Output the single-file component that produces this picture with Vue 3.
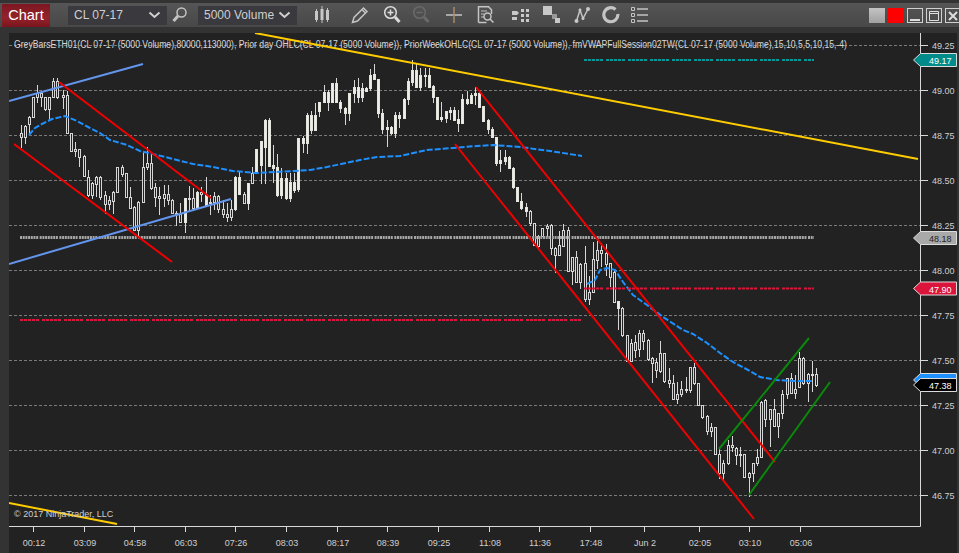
<script setup>
const segs = [
  { ox: 0, oy: 60, fill: false, rows: [
    [64,220,232,195,265],[76,198,232,195,252],[88,172,192,168,225],[100,112,172,110,175],[112,100,112,75,128],[124,100,112,92,142],
    [136,112,148,112,152],[148,112,148,110,182],[160,64,112,55,115],[172,64,112,55,118],[190,106,112,90,148],[202,106,220,92,222],
    [214,220,274,220,276],[226,268,274,245,290],[238,268,290,268,322],[252,288,348,286,350],[264,350,405,330,412],[276,368,405,365,418],
    [290,350,372,348,410],[302,350,410,348,420],[316,404,432,392,462],[328,420,432,408,450],[340,395,422,393,462],[352,322,395,320,398],
    [366,322,342,315,352],[380,340,410,338,414],[392,410,443,380,445],[404,442,510,438,512],[416,425,510,423,530],[430,322,425,272,428],
    [442,308,322,262,330],[454,308,385,275,390],[466,382,410,370,442],[478,408,415,380,465],[492,403,415,374,442],[504,403,420,375,435],
    [518,420,458,418,462],[530,458,462,452,498],[542,462,485,428,487],[556,415,485,413,518,1],[568,414,416,378,452],[580,415,443,385,450],
    [592,395,443,393,445,1],[604,395,402,380,425],[618,402,435,352,438,1],[632,425,430,405,465],[644,408,425,395,450],[656,408,448,405,460],
    [670,448,462,420,475],[682,462,470,430,485],[694,448,470,420,482],[706,350,448,348,452,1],[718,350,403,335,405,1],[732,402,430,395,432],
    [746,370,430,368,450,1],[758,340,370,320,372],[770,268,340,266,342,1]
  ]},
  { ox: 260, oy: 50, fill: true, rows: [
    [4,272,345,272,402],[16,210,292,208,402],[28,210,348,205,352],[40,345,355,285,400],[52,352,435,312,440],[64,385,435,355,447],
    [78,385,445,368,450],[90,397,445,368,455],[102,397,420,370,430],[116,265,418,263,425],[130,265,278,258,310],[142,195,278,190,312],
    [154,195,240,183,252],[166,195,240,158,242],[178,157,182,157,200],[194,127,157,105,160],[206,127,157,120,182],[218,100,157,98,160],
    [230,100,157,85,160],[242,157,175,150,188],[256,175,190,170,225],[268,130,190,128,212],[282,110,130,90,158],[294,110,142,85,158],
    [306,115,142,100,155],[320,115,122,110,125],[332,75,115,58,122],[344,72,88,42,90],[356,88,190,86,203],[368,190,238,178,252],
    [382,230,238,210,290],[394,230,250,228,255],[406,195,250,185,265],[418,195,203,185,235],[434,148,203,145,208],[446,92,148,85,165],
    [458,60,95,30,108],[470,60,110,40,115],[482,75,110,55,122],[496,75,76,55,110],[508,75,110,55,115],[520,108,142,105,158],
    [532,142,208,140,210],[544,202,208,155,215],[558,183,203,182,218],[570,180,185,172,210],[584,180,210,170,212],[596,208,218,180,245],
    [606,148,218,132,222],[622,148,158,122,165],[634,135,158,128,160],[646,130,135,112,165],[658,130,172,125,175],[670,168,212,168,214],
    [686,210,236,208,252],[698,236,262,232,265],[710,262,338,260,348],[722,330,338,300,365],[736,320,332,300,345],[748,320,353,318,358],
    [760,353,412,350,418]
  ]},
  { ox: 500, oy: 170, fill: false, rows: [
    [52,52,92,52,95,1],[64,92,113,68,120,1],[78,112,122,100,140,1],[90,122,160,120,168],[103,160,225,158,228],[115,198,228,196,235],
    [127,175,198,175,200],[142,167,175,162,200],[154,165,235,162,255],[166,235,255,232,310],[178,225,255,182,258],[190,180,228,162,230],
    [205,180,302,172,305],[217,262,302,262,345],[229,262,335,243,338],[241,282,335,278,357],[255,280,388,228,396],[268,365,388,318,405],
    [281,268,365,216,370],[292,240,270,212,298],[304,240,248,220,292],[319,248,282,222,318],[331,280,322,278,350],[343,305,396,303,398],
    [355,393,415,393,480,1],[367,415,495,412,502]
  ]},
  { ox: 610, oy: 330, fill: false, rows: [
    [52,15,92,14,92],[65,38,92,28,92],[77,36,60,15,85],[89,10,58,0,80],[101,10,32,0,60],[115,30,88,28,92],[127,85,98,80,158],
    [139,96,120,85,145],[151,70,122,33,130],[163,70,152,68,158],[178,150,160,115,175],[190,160,207,135,210],[202,192,207,155,222],
    [214,178,193,152,200],[229,178,180,142,190]
  ]},
  { ox: 680, oy: 330, fill: false, rows: [
    [31,112,180,110,188],[43,112,160,100,165],[55,160,226,160,228],[67,226,260,224,268],[82,258,302,256,315],[94,292,302,278,320],
    [106,292,373,292,375],[118,373,428,352,448],[130,400,428,390,455],[145,346,400,330,405],[157,346,350,318,365],[169,354,376,350,405],
    [181,372,376,350,410],[193,372,442,372,445],[208,430,442,425,502],[220,400,430,398,455],[232,382,400,358,408],[244,215,382,213,385],
    [256,210,268,208,292],[271,238,268,238,350],[283,238,288,208,292],[295,248,288,248,325],[307,192,248,180,266],[322,145,192,143,206],
    [334,145,188,130,192],[346,178,188,135,206],[358,85,172,65,175],[370,85,160,82,165],[385,133,160,130,215],[397,133,134,93,185],
    [409,133,166,115,172]
  ]}
]

const candles = []
for (const s of segs) {
  for (const r of s.rows) {
    const x = Math.floor(s.ox + r[0] / 3)
    const y = (v) => Math.round(s.oy + v / 3)
    const top = y(r[1])
    const bottom = Math.max(y(r[2]), top + 1)
    candles.push({
      x: x + 0.5,
      top: top + 0.5,
      h: bottom - top,
      wt: y(r[3]),
      wb: y(r[4]),
      filled: r[5] ? !s.fill : s.fill
    })
  }
}

const gridYs = [45, 90, 135, 180, 225, 270, 315, 360, 405, 450, 495]
const prices = [
  [49.25, 45], [49.0, 90], [48.75, 135], [48.5, 180], [48.25, 225], [48.0, 270],
  [47.75, 315], [47.5, 360], [47.25, 405], [47.0, 450], [46.75, 495]
].map(([p, y]) => ({ label: p.toFixed(2), y }))

const times = [
  ['00:12', 33], ['03:09', 84], ['04:58', 134], ['06:03', 185], ['07:26', 235], ['08:03', 286],
  ['08:17', 337], ['08:39', 387], ['09:25', 438], ['11:08', 489], ['11:36', 539], ['17:48', 590],
  ['Jun 2', 644], ['02:05', 699], ['03:10', 749], ['05:06', 800]
].map(([label, x]) => ({ label, x }))

const tags = [
  { label: '49.17', y: 60, fill: '#008b8b', text: '#ffffff', cls: '' },
  { label: '48.18', y: 238, fill: '#a9a9a9', text: '#222222', cls: '' },
  { label: '47.90', y: 288.5, fill: '#dc143c', text: '#ffffff', cls: '' },
  { label: '47.39', y: 380, fill: '#1e90ff', text: '#ffffff', cls: '' },
  { label: '47.38', y: 385, fill: '#000000', text: '#ffffff', cls: '' }
].map((t) => ({
  ...t,
  points: `913.5,${t.y} 920.5,${t.y - 6.5} 956.5,${t.y - 6.5} 956.5,${t.y + 6.5} 920.5,${t.y + 6.5}`
}))

const vwapA = '29,135 35,128 42,124 52,119 65,116 77,121 90,128 100,133 110,140 127,145 140,151 157,155 173,159 193,164 213,167 233,171 257,173 293,171 310,170 327,167 360,160 377,157 400,156 427,150 453,148 477,146 493,145 520,147 550,151 582,156'
const vwapB = '587,284 595,280 600,270 607,268 615,270 623,282 633,295 647,305 663,317 683,330 693,334 707,343 720,353 733,362 750,371 760,377 777,380 793,381 813,381'

const legend = 'GreyBarsETH01(CL 07-17 (5000 Volume),80000,113000), Prior day OHLC(CL 07-17 (5000 Volume)), PriorWeekOHLC(CL 07-17 (5000 Volume)), fmVWAPFullSession02TW(CL 07-17 (5000 Volume),15,10,5,5,10,15,-4)'
</script>

<template>
  <div class="page">
    <header class="toolbar">
      <div class="chart-btn">Chart</div>
      <div class="select first"><span>CL 07-17</span><svg width="13" height="8" viewBox="0 0 13 8"><path d="M1.5 1.5 6.5 6 11.5 1.5" class="chev" /></svg></div>
      <svg class="ic search" width="16" height="18" viewBox="0 0 16 18"><circle cx="9.5" cy="6.5" r="4.5" class="st" /><path d="M6 10 1.5 15" class="st thick" /></svg>
      <div class="select second"><span>5000 Volume</span><svg width="13" height="8" viewBox="0 0 13 8"><path d="M1.5 1.5 6.5 6 11.5 1.5" class="chev" /></svg></div>

      <svg class="ic candles" width="16" height="18" viewBox="0 0 16 18"><path d="M2.5 3v13M8 0v17M13.5 2v14" class="st thin" /><rect x="1" y="5" width="3" height="9" class="fl" /><rect x="6.5" y="3" width="3" height="11" class="fl" /><rect x="12" y="4" width="3" height="10" class="fl" /></svg>
      <svg class="ic pencil" width="18" height="18" viewBox="0 0 18 18"><path d="M1.5 16.5 3 11.5 12.5 2 16 5.5 6.5 15Z" class="st" /><path d="M11 3.5 14.5 7" class="st" /></svg>
      <svg class="ic zin" width="18" height="20" viewBox="0 0 18 20"><circle cx="7.5" cy="7.5" r="5.8" class="st bright" /><path d="M7.5 4.5v6M4.5 7.5h6" class="st bright" /><path d="M12 12 16.5 17" class="st thick bright" /></svg>
      <svg class="ic zout" width="18" height="20" viewBox="0 0 18 20"><circle cx="7.5" cy="7.5" r="5.8" class="st dim" /><path d="M4.5 7.5h6" class="st dim" /><path d="M12 12 16.5 17" class="st thick dim" /></svg>
      <svg class="ic cross" width="16" height="16" viewBox="0 0 16 16"><path d="M0 8h16" class="st" /><path d="M8 0v16" class="orange" /></svg>
      <svg class="ic doc" width="18" height="18" viewBox="0 0 18 18"><path d="M1.5 16.5V.8h10l3 3V8M1.5 16.5h8" class="st" /><path d="M4 5h6M4 8h3M4 11h3" class="st thin" /><circle cx="10.5" cy="10.5" r="3.5" class="st" /><path d="M13 13l3.5 3.5" class="st" /></svg>
      <svg class="ic cols" width="17" height="15" viewBox="0 0 17 15"><path d="M0 3h5l2 2-2 2H0zM0 9h5v3H0z" class="fl" /><path d="M9 1h3v3H9zM14 1h3v3h-3zM9 6h3v3H9zM14 6h3v3h-3zM9 11h3v3H9zM14 11h3v3h-3z" class="fl" /></svg>
      <svg class="ic squares" width="17" height="18" viewBox="0 0 17 18"><rect x="0" y="0" width="9" height="9" class="fl" /><rect x="9" y="8" width="5" height="5" class="fl dimf" /><rect x="12" y="12" width="5" height="5" class="fl" /></svg>
      <svg class="ic nodes" width="16" height="17" viewBox="0 0 16 17"><path d="M2.5 14 6 3 9 11.5 14 2" class="st" /><circle cx="2.5" cy="14" r="2" class="fl" /><circle cx="6" cy="3" r="1.5" class="fl" /><circle cx="9" cy="11.5" r="1.5" class="fl" /><circle cx="14" cy="2" r="2" class="fl" /></svg>
      <svg class="ic ring" width="18" height="18" viewBox="0 0 18 18"><path d="M13.5 3.5A7 7 0 1 0 15.8 8" class="st ringp" /></svg>
      <svg class="ic list" width="17" height="16" viewBox="0 0 17 16"><path d="M.5.5h3v3h-3zM.5 6.5h3v3h-3zM.5 12.5h3v3h-3z" class="st thin" /><path d="M6 2h11M6 8h11M6 14h11" class="st" /></svg>

      <div class="win">
        <span class="sq grey"></span>
        <span class="sq red"></span>
        <span class="wb"><svg width="14" height="14" viewBox="0 0 14 14"><path d="M2 11h10" class="wbs" /></svg></span>
        <span class="wb"><svg width="14" height="14" viewBox="0 0 14 14"><path d="M2.5 2.5h9v9h-9zM2.5 4.5h9" class="wbt" /></svg></span>
        <span class="wb last"><svg width="14" height="14" viewBox="0 0 14 14"><path d="M3 3l8 8M11 3l-8 8" class="wbs" /></svg></span>
      </div>
    </header>

    <main class="panel">
      <svg class="chart" width="948" height="520" viewBox="9 33 948 520">
        <g class="grid">
          <line v-for="y in gridYs" :key="y" x1="9" x2="920" :y1="y + 0.5" :y2="y + 0.5" />
        </g>

        <text class="legend" x="14" y="48" textLength="833" lengthAdjust="spacingAndGlyphs">{{ legend }}</text>

        <g class="bars">
          <g v-for="(c, i) in candles" :key="i">
            <line :x1="c.x" :x2="c.x" :y1="c.wt" :y2="c.wb" />
            <rect :x="c.x - 1" :y="c.top" width="2" :height="c.h" :class="{ solid: c.filled }" />
          </g>
        </g>

        <polyline class="vwap" :points="vwapA" />
        <polyline class="vwap" :points="vwapB" />

        <line class="grey-level" x1="20" x2="814" y1="237.5" y2="237.5" />
        <line class="teal-level" x1="584" x2="814" y1="60" y2="60" />
        <line class="red-level" x1="584" x2="814" y1="288.5" y2="288.5" />
        <line class="red-level" x1="20" x2="582" y1="320" y2="320" />

        <g class="yellow">
          <line x1="255" y1="33" x2="918" y2="159" />
          <line x1="9" y1="503" x2="117" y2="524" />
        </g>
        <g class="blue">
          <line x1="9" y1="101" x2="143" y2="64" />
          <line x1="9" y1="264" x2="231" y2="199" />
        </g>
        <g class="red">
          <line x1="59" y1="82" x2="211" y2="198" />
          <line x1="14" y1="144" x2="172" y2="262" />
          <line x1="476" y1="87" x2="775" y2="462" />
          <line x1="455" y1="144" x2="754" y2="519" />
        </g>
        <g class="green">
          <line x1="719" y1="449" x2="809" y2="338" />
          <line x1="749" y1="495" x2="830" y2="382" />
        </g>

        <text class="copy" x="14" y="517">© 2017 NinjaTrader, LLC</text>

        <line class="axis" x1="9" x2="920.5" y1="526.5" y2="526.5" />
        <line class="axis" x1="920.5" x2="920.5" y1="33" y2="526.5" />

        <g v-for="p in prices" :key="p.label">
          <line class="axis" x1="920" x2="928" :y1="p.y + 0.5" :y2="p.y + 0.5" />
          <text class="tick" x="932" :y="p.y + 4">{{ p.label }}</text>
        </g>
        <g v-for="t in times" :key="t.label">
          <line class="axis" :x1="t.x + 0.5" :x2="t.x + 0.5" y1="526" y2="532" />
          <text class="tick" :x="t.x + 1" y="546" text-anchor="middle">{{ t.label }}</text>
        </g>

        <g v-for="t in tags" :key="t.label">
          <polygon class="tag" :points="t.points" :fill="t.fill" />
          <text class="tag-text" x="929" :y="t.y + 4" :fill="t.text">{{ t.label }}</text>
        </g>
      </svg>
    </main>
  </div>
</template>

<style scoped>
.page {
  width: 959px;
  height: 553px;
  background: #333333;
  overflow: hidden;
  font-family: "Liberation Sans", Arial, sans-serif;
}
.toolbar {
  box-sizing: border-box;
  margin-top: 3px;
  height: 24px;
  display: flex;
  align-items: center;
  background: linear-gradient(#555555, #484848);
  position: relative;
}
.chart-btn {
  width: 48px;
  height: 23px;
  margin-left: 2px;
  background: linear-gradient(#7d1620, #93232b 60%, #7a141c);
  color: #ffffff;
  font-size: 14.5px;
  line-height: 23px;
  text-align: center;
}
.select {
  box-sizing: border-box;
  width: 99px;
  height: 19px;
  padding: 0 6px;
  display: flex;
  align-items: center;
  justify-content: space-between;
  background: #39393e;
  color: #cfcfcf;
  font-size: 12px;
}
.select.first { margin-left: 18px; }
.select.second { margin-left: 10px; }
.chev { fill: none; stroke: #d0d0d0; stroke-width: 2; }
.ic { flex: none; }
.search { margin-left: 5px; }
.candles { margin-left: 17px; }
.pencil { margin-left: 21px; }
.zin { margin-left: 14px; }
.zout { margin-left: 11px; }
.cross { margin-left: 16px; }
.doc { margin-left: 15px; }
.cols { margin-left: 17px; }
.squares { margin-left: 14px; }
.nodes { margin-left: 14px; }
.ring { margin-left: 12px; }
.list { margin-left: 11px; }
.st { fill: none; stroke: #c4c4c4; stroke-width: 1.5; }
.thin { stroke-width: 1; }
.thick { stroke-width: 3; }
.ringp { stroke-width: 3.2; }
.bright { stroke: #dcdcdc; }
.dim { stroke: #6a6a6a; }
.fl { fill: #c8c8c8; }
.dimf { fill: #999999; }
.orange { fill: none; stroke: #a88a66; stroke-width: 1.5; }
.win {
  margin-left: auto;
  display: flex;
  align-items: center;
  gap: 3px;
}
.sq {
  width: 16px;
  height: 15px;
  display: block;
}
.sq.grey { background: linear-gradient(#c4c4c4, #a0a0a0); }
.sq.red { background: #ff0000; }
.wb {
  box-sizing: border-box;
  width: 16px;
  height: 15px;
  border: 1px solid #d0d0d0;
  display: flex;
}
.wb.last { margin-right: -2px; border-right: 0; }
.wbs { fill: none; stroke: #dddddd; stroke-width: 2; }
.wbt { fill: none; stroke: #dddddd; stroke-width: 1; }
.panel {
  margin: 6px 2px 0 9px;
  height: 520px;
  background: #222222;
}
.chart { display: block; }
.grid line { stroke: #7a7a7a; stroke-width: 1; stroke-dasharray: 3 2; }
.legend { font-size: 10px; fill: #d8d8d8; }
.bars { shape-rendering: crispEdges; }
.bars line { stroke: #d6d6d6; stroke-width: 1; }
.bars rect { fill: #222222; stroke: #d6d6d6; stroke-width: 1; }
.bars rect.solid { fill: #eeeee8; stroke: #e4e4de; }
.vwap { fill: none; stroke: #1e90ff; stroke-width: 2; stroke-dasharray: 6 2; }
.grey-level { stroke: #a6a6a6; stroke-width: 3; stroke-dasharray: 2 0.7 2 0.7 2 0.7 2 0.7 2 0.7 2 0.7 2 1.5; }
.teal-level { stroke: #009a9a; stroke-width: 2; stroke-dasharray: 3 1 3 1 3 1 3 1 3 3; }
.red-level { stroke: #dc143c; stroke-width: 2; stroke-dasharray: 3 1 3 1 3 1 3 1 3 3; }
.yellow line { stroke: #ffcc00; stroke-width: 2; }
.blue line { stroke: #6495ed; stroke-width: 2; }
.red line { stroke: #f00000; stroke-width: 2; }
.green line { stroke: #0a8a0a; stroke-width: 2; }
.copy { font-size: 9px; fill: #cfcfcf; }
.axis { stroke: #d8d8d8; stroke-width: 1; }
.tick { font-size: 9px; fill: #cfcfcf; }
.tag { stroke: #dcdcdc; stroke-width: 1; }
.tag-text { font-size: 9px; }
</style>

<style>
html, body { background: #333333; }
</style>
